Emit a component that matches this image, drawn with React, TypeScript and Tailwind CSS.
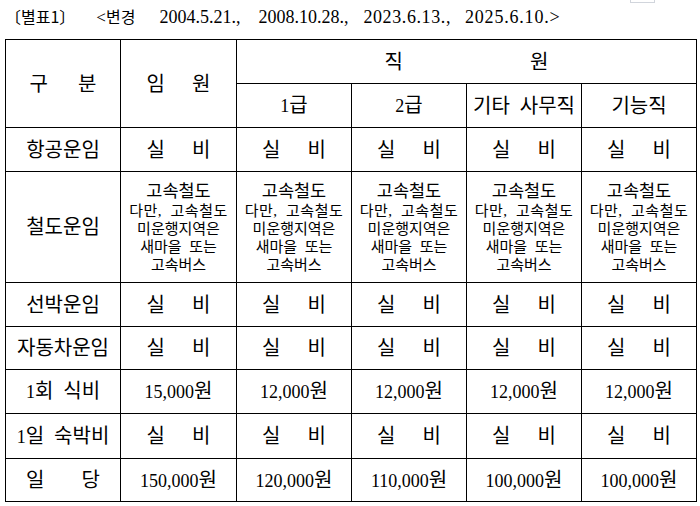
import React from "react";

function Sp({ a, b, gap }: { a: string; b: string; gap: string }) {
  return (
    <span className={`inline-flex items-center justify-center ${gap}`}>
      <span>{a}</span>
      <span>{b}</span>
    </span>
  );
}

function N({ children }: { children: React.ReactNode }) {
  return <span className="text-[18px]">{children}</span>;
}

const cell = "border border-black text-center align-middle p-0";

function Rail() {
  return (
    <div className="flex flex-col items-center">
      <div className="text-[17.5px] leading-[21px]">고속철도</div>
      <div className="text-[15px] leading-[18px] whitespace-pre tracking-[0.5px]">다만,  고속철도</div>
      <div className="text-[15px] leading-[18px]">미운행지역은</div>
      <div className="text-[15px] leading-[18px] whitespace-pre">새마을  또는</div>
      <div className="text-[15px] leading-[18px]">고속버스</div>
    </div>
  );
}

const SB = () => <Sp a="실" b="비" gap="gap-[27px]" />;

const Won = ({ n }: { n: string }) => (
  <span>
    <N>{n}</N>원
  </span>
);

export default function App() {
  const rows: { label: React.ReactNode; h: string; vals: React.ReactNode[] }[] = [
    { label: "항공운임", h: "h-[44px]", vals: [<SB />, <SB />, <SB />, <SB />, <SB />] },
    { label: "철도운임", h: "h-[111px]", vals: [<Rail />, <Rail />, <Rail />, <Rail />, <Rail />] },
    { label: "선박운임", h: "h-[44px]", vals: [<SB />, <SB />, <SB />, <SB />, <SB />] },
    { label: "자동차운임", h: "h-[43px]", vals: [<SB />, <SB />, <SB />, <SB />, <SB />] },
    {
      label: (
        <span>
          <N>1</N>회  식비
        </span>
      ),
      h: "h-[44px]",
      vals: [<Won n="15,000" />, <Won n="12,000" />, <Won n="12,000" />, <Won n="12,000" />, <Won n="12,000" />],
    },
    {
      label: (
        <span>
          <N>1</N>일  숙박비
        </span>
      ),
      h: "h-[45px]",
      vals: [<SB />, <SB />, <SB />, <SB />, <SB />],
    },
    {
      label: <Sp a="일" b="당" gap="gap-[37px]" />,
      h: "h-[43px]",
      vals: [<Won n="150,000" />, <Won n="120,000" />, <Won n="110,000" />, <Won n="100,000" />, <Won n="100,000" />],
    },
  ];

  return (
    <div className="relative w-[700px] h-[506px] bg-white text-black font-['Liberation_Serif','Noto_Sans_CJK_KR',serif]">
      <div className="absolute left-[630px] top-0 w-[25px] h-[3px] border-x border-b border-gray-300" />
      <div className="h-[39px] pl-[5px] pt-[4px] text-[16px] leading-[24px] whitespace-pre flex items-baseline">
        <span>〔별표<span className="font-['Noto_Sans_CJK_KR',sans-serif]">1</span>〕</span>
        <span className="ml-[21px]">
          <span className="text-[17px]">&lt;</span>변경
        </span>
        <span className="ml-[24px] text-[18px]">2004.5.21.,</span>
        <span className="ml-[18px] text-[18px]">2008.10.28.,</span>
        <span className="ml-[15px] text-[18px] tracking-[0.6px]">2023.6.13.,</span>
        <span className="ml-[14px] text-[18px] tracking-[0.8px]">2025.6.10.&gt;</span>
      </div>
      <table className="ml-[5px] w-[691px] table-fixed border-collapse text-[20px] leading-[24px]">
        <colgroup>
          <col className="w-[115px]" />
          <col className="w-[116px]" />
          <col className="w-[115px]" />
          <col className="w-[115px]" />
          <col className="w-[115px]" />
          <col className="w-[115px]" />
        </colgroup>
        <tbody>
          <tr className="h-[44px]">
            <td rowSpan={2} className={cell}>
              <Sp a="구" b="분" gap="gap-[30px]" />
            </td>
            <td rowSpan={2} className={cell}>
              <Sp a="임" b="원" gap="gap-[27px]" />
            </td>
            <td colSpan={4} className={cell}>
              <Sp a="직" b="원" gap="gap-[127px]" />
            </td>
          </tr>
          <tr className="h-[44px]">
            <td className={cell}>
              <N>1</N>급
            </td>
            <td className={cell}>
              <N>2</N>급
            </td>
            <td className={`${cell} whitespace-pre`}>기타  사무직</td>
            <td className={cell}>기능직</td>
          </tr>
          {rows.map((r, i) => (
            <tr key={i} className={r.h}>
              <td className={`${cell} whitespace-pre`}>{r.label}</td>
              {r.vals.map((v, j) => (
                <td key={j} className={cell}>
                  {v}
                </td>
              ))}
            </tr>
          ))}
        </tbody>
      </table>
    </div>
  );
}
